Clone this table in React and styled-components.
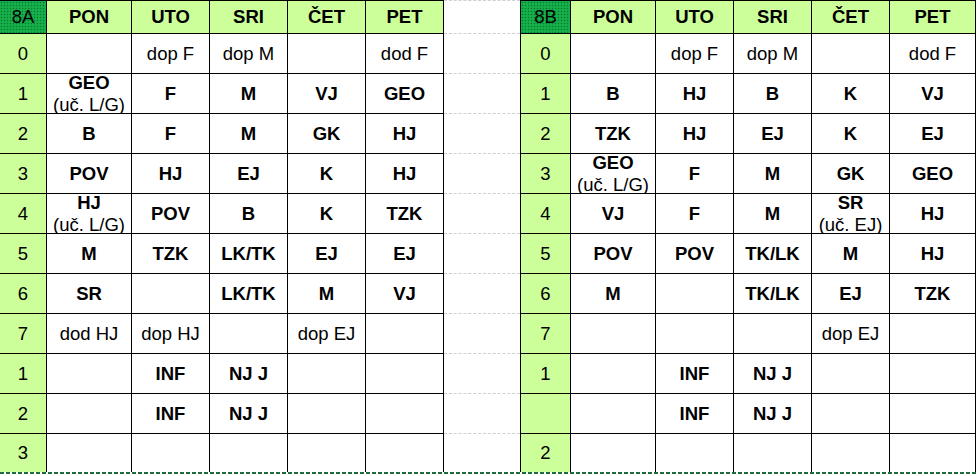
import React from "react";
import styled, { createGlobalStyle } from "styled-components";

const GlobalStyle = createGlobalStyle`
  html, body {
    margin: 0;
    padding: 0;
    background: #fff;
  }
  body {
    font-family: "Liberation Sans", Arial, sans-serif;
    color: #000;
  }
`;

const Page = styled.div`
  width: 977px;
  display: flex;
  flex-direction: column;
`;

const Sheet = styled.div`
  display: flex;
  align-items: flex-start;
`;

// print-area edge drawn by the spreadsheet
const PrintEdge = styled.div`
  height: 2px;
  width: 100%;
  background-image: repeating-linear-gradient(
    90deg,
    #1f6b3c 0 4px,
    transparent 4px 6px
  );
`;

const Table = styled.div`
  display: grid;
  grid-template-columns: ${(p) => p.$cols};
  grid-template-rows: 33px repeat(10, 40px) 38px;
  border-top: 1px solid #000;
  border-left: ${(p) => (p.$edge ? "1px solid #000" : "none")};
`;

const Cell = styled.div`
  box-sizing: border-box;
  display: flex;
  flex-direction: column;
  align-items: center;
  justify-content: center;
  text-align: center;
  border-right: 1px solid #000;
  border-bottom: ${(p) => (p.$last ? "none" : "1px solid #000")};
  background: ${(p) => (p.$tint ? "#ccff99" : "#fff")};
  font-size: 18.5px;
  line-height: 22px;
  font-weight: ${(p) => (p.$bold ? 700 : 400)};
  white-space: nowrap;
`;

const ClassCell = styled(Cell)`
  background-color: #0fa845;
  background-image: radial-gradient(#07782f 0.7px, transparent 0.9px),
    radial-gradient(#39c266 0.6px, transparent 0.8px);
  background-size: 3px 3px, 3px 3px;
  background-position: 0 0, 1.5px 1.5px;
  font-weight: 400;
`;

const Subject = styled.span`
  font-weight: 700;
`;

const Teacher = styled.span`
  font-weight: 400;
`;

const Gap = styled.div`
  width: 76px;
  display: grid;
  grid-template-rows: 33px repeat(10, 40px) 38px;
  border-top: 1px dashed #cfcfcf;
`;

const GapCell = styled.div`
  box-sizing: border-box;
  border-bottom: ${(p) => (p.$last ? "none" : "1px dashed #cfcfcf")};
`;

const DAYS = ["PON", "UTO", "SRI", "ČET", "PET"];

const LEFT = {
  name: "8A",
  cols: "47px 85px 78px 78px 78px 78px",
  rows: [
    ["0", "", "dop F", "dop M", "", "dod F"],
    ["1", ["GEO", "(uč. L/G)"], "F", "M", "VJ", "GEO"],
    ["2", "B", "F", "M", "GK", "HJ"],
    ["3", "POV", "HJ", "EJ", "K", "HJ"],
    ["4", ["HJ", "(uč. L/G)"], "POV", "B", "K", "TZK"],
    ["5", "M", "TZK", "LK/TK", "EJ", "EJ"],
    ["6", "SR", "", "LK/TK", "M", "VJ"],
    ["7", "dod HJ", "dop HJ", "", "dop EJ", ""],
    ["1", "", "INF", "NJ J", "", ""],
    ["2", "", "INF", "NJ J", "", ""],
    ["3", "", "", "", "", ""],
  ],
};

const RIGHT = {
  name: "8B",
  cols: "50px 85px 78px 78px 78px 86px",
  rows: [
    ["0", "", "dop F", "dop M", "", "dod F"],
    ["1", "B", "HJ", "B", "K", "VJ"],
    ["2", "TZK", "HJ", "EJ", "K", "EJ"],
    ["3", ["GEO", "(uč. L/G)"], "F", "M", "GK", "GEO"],
    ["4", "VJ", "F", "M", ["SR", "(uč. EJ)"], "HJ"],
    ["5", "POV", "POV", "TK/LK", "M", "HJ"],
    ["6", "M", "", "TK/LK", "EJ", "TZK"],
    ["7", "", "", "", "dop EJ", ""],
    ["1", "", "INF", "NJ J", "", ""],
    ["", "", "INF", "NJ J", "", ""],
    ["2", "", "", "", "", ""],
  ],
};

// extra slots (dop/dod) are written in regular weight
const isPlain = (v) => /^do[pd] /.test(v);

function Slot({ value, last }) {
  if (Array.isArray(value)) {
    return (
      <Cell $last={last}>
        <Subject>{value[0]}</Subject>
        <Teacher>{value[1]}</Teacher>
      </Cell>
    );
  }
  return (
    <Cell $last={last} $bold={value && !isPlain(value)}>
      {value}
    </Cell>
  );
}

function Timetable({ data, edge }) {
  const lastIndex = data.rows.length - 1;
  return (
    <Table $cols={data.cols} $edge={edge}>
      <ClassCell>{data.name}</ClassCell>
      {DAYS.map((d) => (
        <Cell key={d} $tint $bold>
          {d}
        </Cell>
      ))}
      {data.rows.map((row, i) =>
        row.map((value, j) =>
          j === 0 ? (
            <Cell key={`${i}-${j}`} $tint $last={i === lastIndex}>
              {value}
            </Cell>
          ) : (
            <Slot key={`${i}-${j}`} value={value} last={i === lastIndex} />
          )
        )
      )}
    </Table>
  );
}

export default function App() {
  return (
    <Page>
      <GlobalStyle />
      <Sheet>
        <Timetable data={LEFT} />
        <Gap>
          {Array.from({ length: 12 }, (_, i) => (
            <GapCell key={i} $last={i === 11} />
          ))}
        </Gap>
        <Timetable data={RIGHT} edge />
      </Sheet>
      <PrintEdge />
    </Page>
  );
}
